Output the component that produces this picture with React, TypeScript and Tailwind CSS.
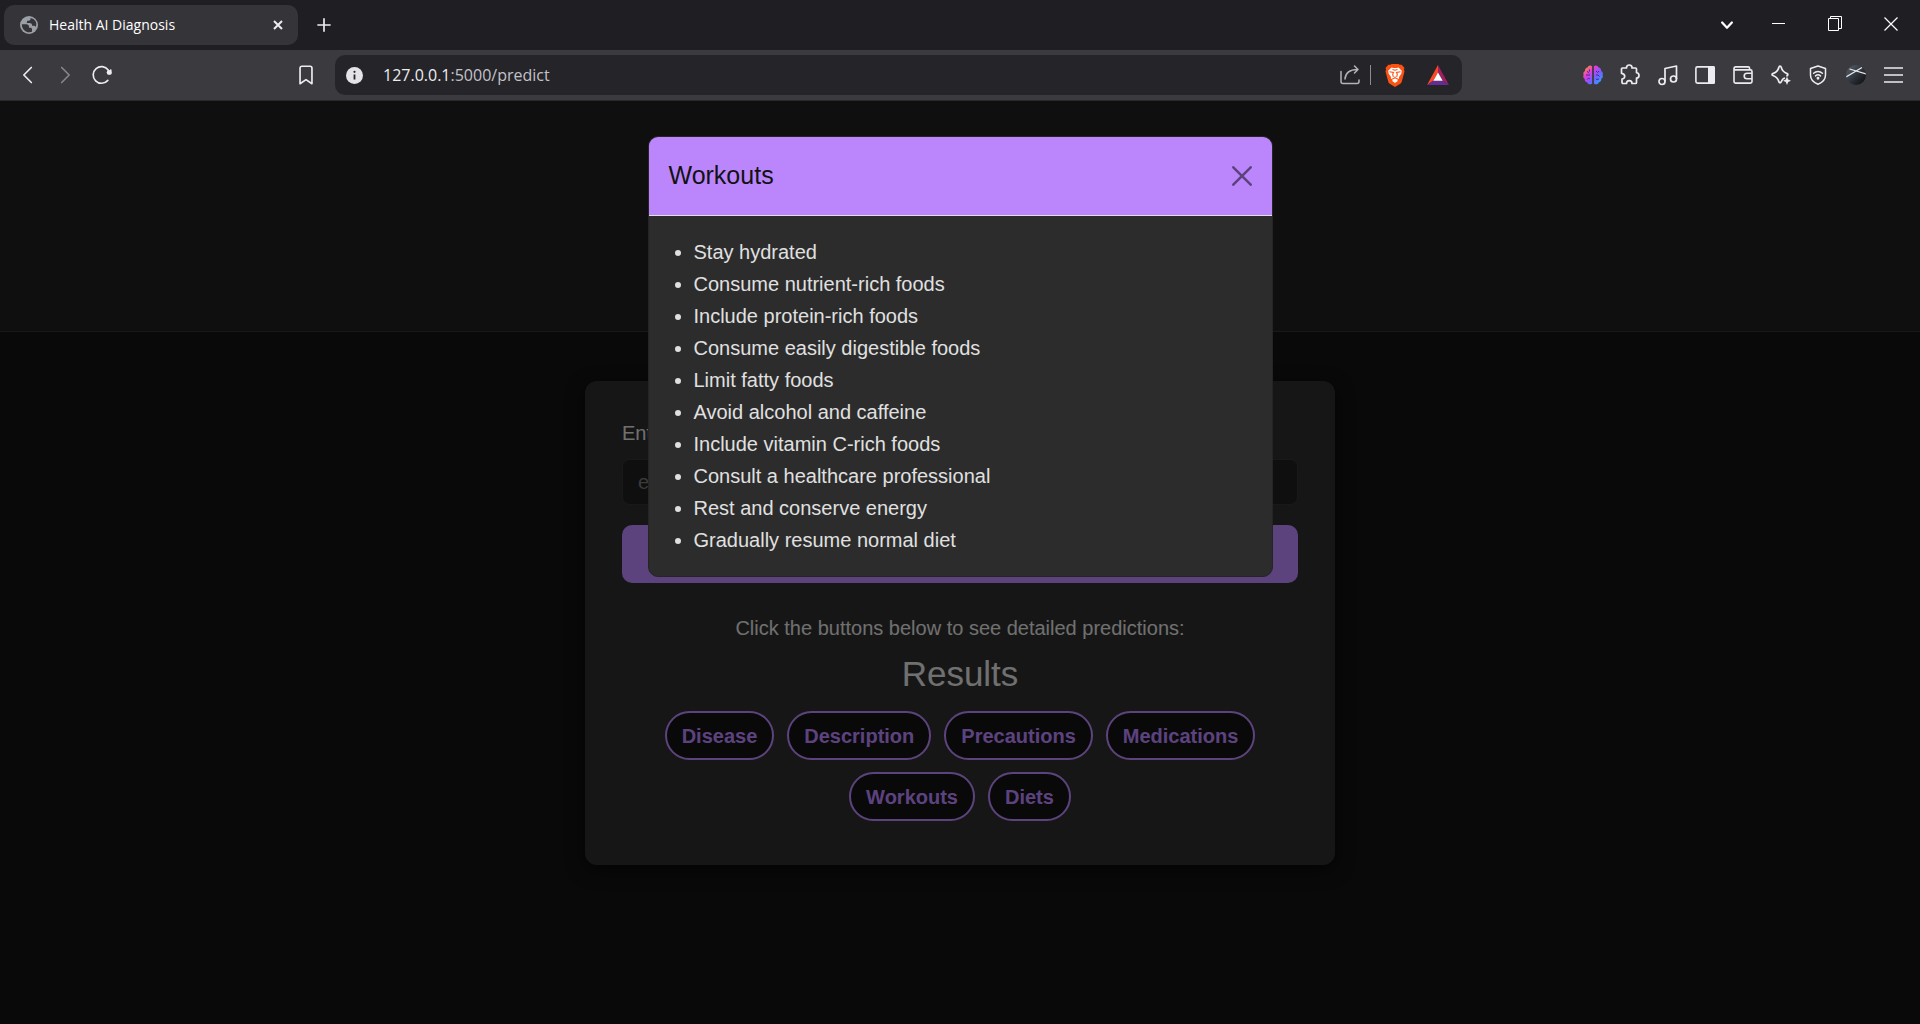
import React from "react";

const workouts = [
  "Stay hydrated",
  "Consume nutrient-rich foods",
  "Include protein-rich foods",
  "Consume easily digestible foods",
  "Limit fatty foods",
  "Avoid alcohol and caffeine",
  "Include vitamin C-rich foods",
  "Consult a healthcare professional",
  "Rest and conserve energy",
  "Gradually resume normal diet",
];

const results = ["Disease", "Description", "Precautions", "Medications", "Workouts", "Diets"];

type IconProps = { children: React.ReactNode; size?: number; stroke?: number; className?: string };

function Icon({ children, size = 24, stroke = 2, className = "" }: IconProps) {
  return (
    <svg
      width={size}
      height={size}
      viewBox="0 0 24 24"
      fill="none"
      stroke="currentColor"
      strokeWidth={stroke}
      strokeLinecap="round"
      strokeLinejoin="round"
      className={"shrink-0 " + className}
      aria-hidden="true"
    >
      {children}
    </svg>
  );
}

function IconButton({ label, children, className = "" }: { label: string; children: React.ReactNode; className?: string }) {
  return (
    <button type="button" aria-label={label} className={"flex h-10 items-center justify-center " + className}>
      {children}
    </button>
  );
}

function TabStrip() {
  return (
    <div className="flex h-[50px] items-center bg-[#1f1e23] text-[#ededf0]">
      <div className="ml-1 flex h-10 w-[294px] items-center rounded-[10px] bg-[#353439] pl-4 pr-3">
        <Icon size={18} stroke={1}>
          <circle cx="12" cy="12" r="12" fill="#9aa0a6" stroke="none" />
          <path
            d="M2.400 11h6.200c2 0 3.400 1.300 3.400 3.200v1.600h2c1.200 0 2 .8 2 2v3.300C9.500 23.500 2.400 19 2.400 11zM14 2.600V4c0 1.300-1 2.300-2.300 2.300H9.500v1.500c0 1-.7 1.700-1.700 1.700 0 0 4.700-.1 6.200 0 1.200.1 2 1 2 2.200v1.300h2.300c1.200 0 2.200.6 2.700 1.600C23.500 8.500 19.500 3.500 14 2.600z"
            fill="#353439"
            stroke="none"
          />
        </Icon>
        <span className="ml-[11px] grow whitespace-nowrap pb-px font-['Open_Sans',sans-serif] text-[14px] text-white">
          Health AI Diagnosis
        </span>
        <IconButton label="Close tab" className="w-4">
          <Icon size={16} stroke={3}>
            <path d="M6 6l12 12M18 6L6 18" strokeLinecap="butt" />
          </Icon>
        </IconButton>
      </div>
      <IconButton label="New tab" className="ml-3 w-7">
        <Icon size={20} stroke={2}>
          <path d="M12 4v16M4 12h16" strokeLinecap="butt" />
        </Icon>
      </IconButton>
      <div className="mr-px ml-auto grid grid-cols-[48px_56px_56px_56px] pb-[2px] text-white">
        <IconButton label="Search tabs">
          <Icon size={18} stroke={3}>
            <path d="M5.500 10l6.500 7 6.500-7" />
          </Icon>
        </IconButton>
        <IconButton label="Minimize">
          <svg width="14" height="14" aria-hidden="true">
            <path d="M0 6.500h13" stroke="currentColor" />
          </svg>
        </IconButton>
        <IconButton label="Restore">
          <svg width="14" height="16" fill="none" stroke="currentColor" aria-hidden="true">
            <path d="M.5 2.500h10v12h-10zM2.500 2.500v-2h11v12h-3" />
          </svg>
        </IconButton>
        <IconButton label="Close window">
          <svg width="14" height="14" fill="none" stroke="currentColor" strokeWidth="1.200" aria-hidden="true">
            <path d="M.5.5l13 13M13.500.5l-13 13" />
          </svg>
        </IconButton>
      </div>
    </div>
  );
}

function BraveLion() {
  return (
    <svg width="20" height="23" viewBox="0 0 20 23" aria-hidden="true">
      <path d="M5.500.8L6.500 0h7l1 .8h2.200L19.500 4l-.6 1.600.6 2-2.700 9.800c-.3 1.200-.9 1.900-1.900 2.600L10 23l-4.900-3c-1-.7-1.600-1.400-1.900-2.600L.5 7.600l.6-2L.5 4l2.800-3.200z" fill="#fb5113" />
      <path d="M6.500 3.400c1.200.3 2.300.6 3.500.6s2.300-.3 3.500-.6L16.800 6.800l-.5 3-2 2.700c-.4.700 0 1.500-.6 2.200l-1.500 1 .6 1.400L10 19l-2.800-1.900.6-1.400-1.500-1c-.6-.7-.2-1.500-.6-2.200l-2-2.700-.5-3z" fill="#fff" />
      <path
        d="M4.500 7.700l4 .7-.8 1.900.6 2.500M15.500 7.700l-4 .7.800 1.900-.6 2.500M7.500 5.500l2.500.7 2.500-.7M10 12.500v1.500M7.300 15l2.700-1.200 2.700 1.200"
        fill="none"
        stroke="#fb5113"
        strokeWidth="1.100"
      />
    </svg>
  );
}

function BatTriangle() {
  return (
    <svg width="22" height="20" viewBox="0 0 22 20" aria-hidden="true">
      <path d="M11 0v7.500L6.500 15.500 0 20z" fill="#ff4724" />
      <path d="M11 0l11 20-6.500-4.500L11 7.500z" fill="#9e1f63" />
      <path d="M0 20l6.500-4.500h9L22 20z" fill="#662d91" />
      <path d="M11 7.500l4.700 8.200H6.300z" fill="#fff" />
    </svg>
  );
}

function Brain() {
  return (
    <svg width="20" height="20" viewBox="0 0 20 20" aria-hidden="true">
      <defs>
        <linearGradient id="brain" x1="0" y1="0" x2="1" y2="1">
          <stop offset="0.100" stopColor="#ff8a3c" />
          <stop offset="0.350" stopColor="#e23ae0" />
          <stop offset="0.600" stopColor="#7a5cff" />
          <stop offset="0.950" stopColor="#22a8ff" />
        </linearGradient>
      </defs>
      <path
        d="M9.100 1.500v17c-1.600 1.500-4.300 1-5-1.200-1.700-.2-2.700-1.800-2.300-3.400C.3 13 0 11.500.6 10 0 8 .7 6.500 2 5.900 1.900 4 3 2.700 4.600 2.500 5.300.3 7.700-.2 9.100 1.500zM10.900 1.500v17c1.600 1.500 4.300 1 5-1.200 1.700-.2 2.700-1.800 2.300-3.400 1.700-.9 2-2.400 1.400-3.900.6-2-.1-3.500-1.400-4.100.1-1.900-1-3.200-2.600-3.400C14.700.3 12.300-.2 10.900 1.500z"
        fill="url(#brain)"
      />
      <path d="M3 10h4M4 6.500l2 1M6.500 4.500v2M4 14.500c1-1.500 2-1.500 3-.5M13 6l1.500 1.500L16 6M13 10h2l1.500 1.500M13 14.500l3-.5" stroke="#4b2a8c" strokeWidth="1" fill="none" />
    </svg>
  );
}

function Avatar() {
  return (
    <svg width="20" height="20" viewBox="0 0 20 20" aria-hidden="true">
      <defs>
        <linearGradient id="avatar" x1="0" y1="0" x2="1" y2="1">
          <stop offset="0" stopColor="#5b6570" />
          <stop offset="0.550" stopColor="#2b3038" />
          <stop offset="1" stopColor="#08090b" />
        </linearGradient>
        <clipPath id="avatar-clip">
          <circle cx="10" cy="10" r="10" />
        </clipPath>
      </defs>
      <g clipPath="url(#avatar-clip)">
        <rect width="20" height="20" fill="url(#avatar)" />
        <path d="M0 12L16 2.500M3.500 4L20 9" stroke="#e8eaed" strokeWidth="1.300" />
      </g>
    </svg>
  );
}

function Toolbar() {
  return (
    <div className="flex h-[51px] items-center border-b border-[#29282c] bg-[#3b3a3f] text-[#ededf0]">
      <div className="ml-[9px] grid w-28 grid-cols-3">
        <IconButton label="Back">
          <Icon size={20} stroke={2}>
            <path d="M16 3L7 12l9 9" />
          </Icon>
        </IconButton>
        <IconButton label="Forward" className="text-[#87868a]">
          <Icon size={20} stroke={2}>
            <path d="M8 3l9 9-9 9" />
          </Icon>
        </IconButton>
        <IconButton label="Reload">
          <Icon size={20} stroke={2}>
            <path d="M19 18.500A10 10 0 1 1 19.500 6" />
            <circle cx="20.500" cy="9" r="2.900" fill="currentColor" stroke="none" />
            <path d="M22.500 6v4.500" />
          </Icon>
        </IconButton>
      </div>
      <IconButton label="Bookmark this page" className="ml-[170px] w-[30px]">
        <Icon size={22} stroke={1.8}>
          <path d="M5.500 21.500V4.500A2 2 0 0 1 7.500 2.500h9a2 2 0 0 1 2 2v17L12 17z" />
        </Icon>
      </IconButton>
      <div className="ml-[14px] flex h-10 w-[1127px] shrink items-center rounded-[10px] bg-[#252429]">
        <svg width="17" height="17" viewBox="0 0 17 17" className="ml-[11px] shrink-0" aria-hidden="true">
          <circle cx="8.500" cy="8.500" r="8.500" fill="#e3e3e8" />
          <path d="M8.500 7.500v5" stroke="#252429" strokeWidth="1.800" />
          <circle cx="8.500" cy="4.800" r="1.100" fill="#252429" />
        </svg>
        <p className="ml-5 grow font-['Open_Sans',sans-serif] text-[16px] text-[#c3c2c9]">
          <span className="text-[#ededf0]">127.0.0.1</span>:5000/predict
        </p>
        <IconButton label="Share" className="w-10 text-[#b4b3ba]">
          <svg width="20" height="20" fill="none" stroke="currentColor" strokeWidth="1.500" strokeLinecap="round" strokeLinejoin="round" aria-hidden="true">
            <path d="M1 6.500v10a2 2 0 0 0 2 2h14a2 2 0 0 0 2-2V15M5 14C5.500 8 9 4.500 17.500 4.500M14.500 1l3.500 3.500L14.500 8" />
          </svg>
        </IconButton>
        <div className="h-5 w-px bg-[#8c8b90]" />
        <IconButton label="Shields" className="ml-[5px] w-[37px]">
          <BraveLion />
        </IconButton>
        <IconButton label="Rewards" className="mr-[6px] ml-[6px] w-[37px]">
          <BatTriangle />
        </IconButton>
      </div>
      <div className="mr-2 ml-auto grid w-[338px] shrink-0 grid-cols-9">
        <IconButton label="AI extension">
          <Brain />
        </IconButton>
        <IconButton label="Extensions">
          <svg width="20" height="22" viewBox="0 0 20 22" fill="none" stroke="currentColor" strokeWidth="1.700" strokeLinejoin="round" aria-hidden="true">
            <path d="M2.500 4h4C6.300 2.200 7.500 1 9.300 1S12.200 2.200 12 4h3.500a1 1 0 0 1 1 1v3.700C18 8.900 19 10 19 11.500S18 14 16.500 14.200v4.300a1 1 0 0 1-1 1H12c0-1.800-.8-2.800-2.700-2.800s-2.800 1-2.800 2.800H3a1 1 0 0 1-1-1V15c1.600 0 2.700-1.200 2.700-2.800S3.500 9.500 1.500 9.300V5a1 1 0 0 1 1-1z" />
          </svg>
        </IconButton>
        <IconButton label="Music">
          <svg width="20" height="22" viewBox="0 0 20 22" fill="none" stroke="currentColor" strokeWidth="1.700" strokeLinejoin="round" aria-hidden="true">
            <circle cx="4" cy="17.500" r="3" />
            <circle cx="15.500" cy="15" r="3" />
            <path d="M7 17.500V4.500L18.500 2v13" />
          </svg>
        </IconButton>
        <IconButton label="Side panel">
          <svg width="20" height="18" viewBox="0 0 20 18" aria-hidden="true">
            <rect x="0.900" y="0.900" width="18.200" height="16.200" rx="1.500" fill="none" stroke="currentColor" strokeWidth="1.600" />
            <path d="M13 0h5.500a1.500 1.500 0 0 1 1.500 1.500v15a1.500 1.500 0 0 1-1.500 1.500H13z" fill="currentColor" />
          </svg>
        </IconButton>
        <IconButton label="Wallet">
          <svg width="20" height="18" viewBox="0 0 20 18" fill="none" stroke="currentColor" strokeWidth="1.600" strokeLinejoin="round" aria-hidden="true">
            <path d="M1 2.500A1.600 1.600 0 0 1 2.600.9H15A1.600 1.600 0 0 1 16.600 2.500v1.200M1 2.500v13A1.600 1.600 0 0 0 2.600 17.100h14.800A1.600 1.600 0 0 0 19 15.500v-10a1.600 1.600 0 0 0-1.600-1.600H2.500A1.500 1.500 0 0 1 1 2.500zM19 7.200h-5a2.700 2.700 0 0 0 0 5.600h5" />
          </svg>
        </IconButton>
        <IconButton label="Assistant">
          <svg width="20" height="20" viewBox="0 0 20 20" aria-hidden="true">
            <path
              d="M14 13c-2 .5-3 1.400-3.600 3.600-.3.900-.7 1.200-1.300 1.200s-1-.4-1.300-1.200C7 13.500 5.800 12 2.300 10.800 1.400 10.500 1 10.200 1 9.600s.4-.9 1.300-1.200C5.800 7.300 7 5.800 7.800 2.500 8 1.600 8.400 1.200 9 1.200s1 .4 1.300 1.200c.8 3.400 2 4.800 5.400 6 .9.300 1.200.6 1.200 1.200 0 .8-.6 1.200-1.500 1.500"
              fill="none"
              stroke="currentColor"
              strokeWidth="1.700"
            />
            <path d="M16 11.500l1.200 3.100 2.800 1.200-2.800 1.200L16 20l-1.200-3L12 15.800l2.800-1.200z" fill="currentColor" />
          </svg>
        </IconButton>
        <IconButton label="VPN">
          <svg width="18" height="20" viewBox="0 0 18 20" fill="none" stroke="currentColor" strokeWidth="1.500" strokeLinecap="round" strokeLinejoin="round" aria-hidden="true">
            <path d="M9 1l7.500 2.500V10c0 4.500-3.200 7.500-7.500 9.200C4.700 17.500 1.500 14.500 1.500 10V3.500z" />
            <path d="M4.600 8.300a6.500 6.500 0 0 1 8.800 0M6.500 10.900a3.800 3.800 0 0 1 5 0" />
            <circle cx="9" cy="13.300" r="0.700" fill="currentColor" />
          </svg>
        </IconButton>
        <IconButton label="Profile">
          <Avatar />
        </IconButton>
        <IconButton label="Menu">
          <svg width="19" height="18" stroke="currentColor" strokeWidth="1.600" aria-hidden="true">
            <path d="M0 2h19M0 9h19M0 16h19" />
          </svg>
        </IconButton>
      </div>
    </div>
  );
}

function PredictionPage() {
  return (
    <>
      <header className="h-[231px] border-b border-[#333333] bg-[#1e1e1e]" />
      <main className="mx-auto mt-[49px] w-full max-w-[750px] rounded-xl bg-[#2c2c2c] px-[37px] pt-9 pb-11 shadow-[0_5px_18px_rgba(0,0,0,0.6)]">
        <form onSubmit={(event) => event.preventDefault()}>
          <label htmlFor="symptoms" className="block leading-8">
            Enter Symptoms:
          </label>
          <input
            id="symptoms"
            type="text"
            placeholder="e.g., itching, sleeping, aching"
            className="mt-[10px] block h-[46px] w-full rounded-lg border border-[#333333] bg-[#1e1e1e] px-[15px] placeholder:text-[#757575]"
          />
          <button type="submit" aria-label="Predict" className="mt-5 block h-[58px] w-full rounded-[10px] bg-[#bb86fc]" />
        </form>
        <p className="mt-[30px] text-center leading-[30px]">Click the buttons below to see detailed predictions:</p>
        <h2 className="mt-[10px] text-center text-[35px] leading-[42px]">Results</h2>
        <div className="mt-4 flex flex-wrap justify-center gap-x-[13px] gap-y-3">
          {results.map((name) => (
            <button
              key={name}
              type="button"
              className="h-[49px] rounded-full border-2 border-[#bb86fc] bg-[#121212] px-[15px] font-bold text-[#bb86fc]"
            >
              {name}
            </button>
          ))}
        </div>
      </main>
    </>
  );
}

function WorkoutsModal() {
  return (
    <div className="absolute inset-0 bg-black/50 pt-[35px]">
      <section
        role="dialog"
        aria-modal="true"
        aria-labelledby="modal-title"
        className="mx-auto max-w-[625px] overflow-hidden rounded-[10px] border border-[#252525] bg-[#2c2c2c] text-[#e0e0e0]"
      >
        <div className="flex h-[79px] items-center justify-between border-b border-[#dee2e6] bg-[#bb86fc] px-5 text-[#121212]">
          <h1 id="modal-title" className="text-[25px]">
            Workouts
          </h1>
          <button type="button" aria-label="Close" className="opacity-50">
            <svg width="20" height="20" viewBox="0 0 20 20" stroke="#000" strokeWidth="2.500" strokeLinecap="round" aria-hidden="true">
              <path d="M1.300 1.300l17.400 17.400M18.700 1.300L1.300 18.700" />
            </svg>
          </button>
        </div>
        <ul className="list-disc py-5 pr-5 pl-[45px] leading-8">
          {workouts.map((item) => (
            <li key={item}>{item}</li>
          ))}
        </ul>
      </section>
    </div>
  );
}

export default function App() {
  return (
    <div className="flex min-h-screen flex-col bg-[#121212]">
      <TabStrip />
      <Toolbar />
      <div className="relative grow font-['Liberation_Sans',Arial,sans-serif] text-[20px] text-[#e0e0e0]">
        <PredictionPage />
        <WorkoutsModal />
      </div>
    </div>
  );
}
